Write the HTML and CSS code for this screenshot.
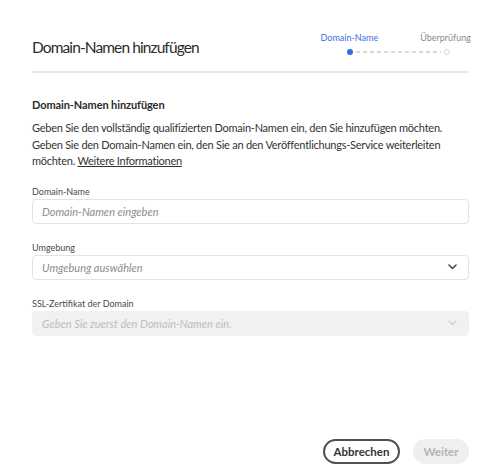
FILE: index.html
```html
<!DOCTYPE html>
<html lang="de">
<head>
<meta charset="utf-8">
<title>Domain-Namen hinzufügen</title>
<link rel="stylesheet" href="styles.css">
</head>
<body>
<div class="dialog">
  <header class="head">
    <h1 class="title">Domain-Namen hinzufügen</h1>
    <div class="stepper">
      <div class="labels">
        <span class="step-label active">Domain-Name</span>
        <span class="step-label">Überprüfung</span>
      </div>
      <div class="dots">
        <span class="dot filled"></span>
        <span class="dash"></span>
        <span class="dot hollow"></span>
      </div>
    </div>
  </header>
  <hr class="divider">
  <main class="body">
    <h2 class="subtitle">Domain-Namen hinzufügen</h2>
    <p class="desc">Geben Sie den vollständig qualifizierten Domain-Namen ein, den Sie hinzufügen möchten. Geben Sie den Domain-Namen ein, den Sie an den Veröffentlichungs-Service weiterleiten möchten. <a class="link" href="#">Weitere Informationen</a></p>

    <div class="field">
      <label class="field-label">Domain-Name</label>
      <div class="control"><span class="placeholder">Domain-Namen eingeben</span></div>
    </div>

    <div class="field">
      <label class="field-label">Umgebung</label>
      <div class="control select"><span class="placeholder">Umgebung auswählen</span>
        <svg class="chev" width="9" height="6" viewBox="0 0 9 6"><path d="M1 1l3.5 3.5L8 1" fill="none" stroke="currentColor" stroke-width="1.6" stroke-linecap="round" stroke-linejoin="round"/></svg>
      </div>
    </div>

    <div class="field">
      <label class="field-label">SSL-Zertifikat der Domain</label>
      <div class="control select disabled"><span class="placeholder">Geben Sie zuerst den Domain-Namen ein.</span>
        <svg class="chev" width="9" height="6" viewBox="0 0 9 6"><path d="M1 1l3.5 3.5L8 1" fill="none" stroke="currentColor" stroke-width="1.4" stroke-linecap="round" stroke-linejoin="round"/></svg>
      </div>
    </div>
  </main>
  <footer class="foot">
    <button class="btn secondary">Abbrechen</button>
    <button class="btn primary-disabled">Weiter</button>
  </footer>
</div>
</body>
</html>
```
FILE: styles.css
```css
* { box-sizing: border-box; }
html, body { margin: 0; padding: 0; background: #fff; }
body {
  font-family: Lato, "Open Sans", sans-serif;
  color: #2c2c2c;
}
.dialog {
  min-height: 474px;
  display: flex;
  flex-direction: column;
  padding: 0 29px 10px 32px;
}
.head {
  display: flex;
  justify-content: space-between;
  align-items: flex-start;
  height: 71px;
}
.title {
  margin: 37px 0 0;
  font-size: 15.5px;
  line-height: 20px;
  font-weight: 400;
  color: #2c2c2c;
  letter-spacing: -0.9px;
}
.stepper {
  margin-top: 31px;
  margin-right: -2px;
  display: flex;
  flex-direction: column;
}
.labels {
  display: flex;
  gap: 42px;
}
.step-label {
  font-size: 9px;
  line-height: 13px;
  color: #8a8a8a;
}
.step-label.active { color: #3a72dc; }
.dots {
  display: flex;
  align-items: center;
  padding: 0 21px 0 26px;
  margin-top: 5px;
  height: 6px;
}
.dot { width: 6px; height: 6px; border-radius: 50%; flex: none; }
.dot.filled { background: #2f6fe0; }
.dot.hollow { border: 1.5px solid #d6d6d6; width: 6px; height: 6px; }
.dash {
  flex: 1;
  height: 1.5px;
  margin: 0 3px;
  background: repeating-linear-gradient(to right, #d9d9d9 0 4px, transparent 4px 7px);
}
.divider {
  margin: 0;
  border: 0;
  height: 2px;
  background: #e9e9e9;
}
.body { display: flex; flex-direction: column; }
.subtitle {
  margin: 24px 0 0;
  font-size: 11px;
  font-weight: 700;
  line-height: 15px;
  color: #2c2c2c;
  letter-spacing: -0.1px;
}
.desc {
  margin: 8px 0 0;
  font-size: 11px;
  line-height: 16.5px;
  color: #333;
  letter-spacing: -0.25px;
}
.link { color: #333; text-decoration: underline; }
.field { display: flex; flex-direction: column; margin-top: 16px; }
.field + .field { margin-top: 18px; }
.field-label {
  font-size: 9px;
  line-height: 12px;
  color: #4a4a4a;
  margin-bottom: 1px;
}
.control {
  height: 25px;
  border: 1px solid #e3e3e3;
  border-radius: 4px;
  display: flex;
  align-items: center;
  padding: 0 9px;
}
.placeholder {
  font-style: italic;
  font-size: 11px;
  color: #8c8c8c;
}
.select { justify-content: space-between; }
.chev { color: #4a4a4a; margin-right: 2px; }
.disabled { background: #f1f1f1; border-color: #f1f1f1; }
.disabled .placeholder { color: #bdbdbd; }
.disabled .chev { color: #cfcfcf; }
.foot {
  margin-top: auto;
  display: flex;
  justify-content: flex-end;
  gap: 13px;
}
.btn {
  height: 25px;
  border-radius: 13px;
  font-family: Lato, sans-serif;
  font-weight: 700;
  font-size: 11.5px;
  padding: 0 8px;
}
.secondary {
  width: 77px;
  background: #fff;
  border: 2px solid #505050;
  color: #333;
}
.primary-disabled {
  width: 56px;
  background: #efefef;
  border: 0;
  color: #b5b5b5;
}
```
